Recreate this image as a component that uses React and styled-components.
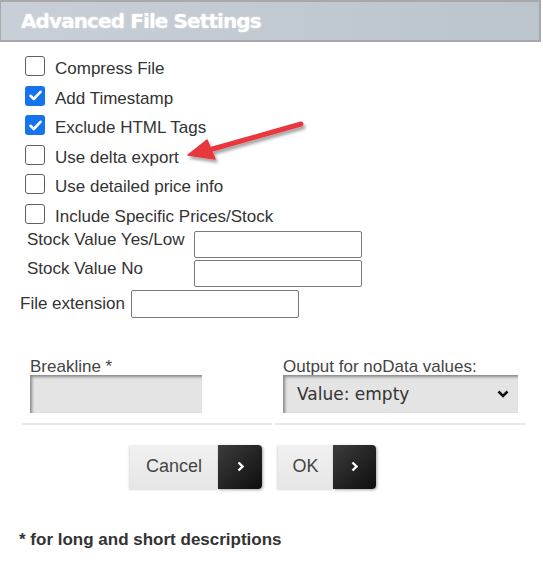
import React from "react";
import styled, { createGlobalStyle } from "styled-components";

const GlobalStyle = createGlobalStyle`
  body {
    margin: 0;
    background: #fff;
    font-family: "Liberation Sans", Arial, sans-serif;
  }
`;

const Dialog = styled.div`
  position: relative;
  width: 541px;
  height: 561px;
  background: #fff;
  color: #333;
`;

const Header = styled.div`
  height: 38px;
  display: flex;
  align-items: center;
  padding-left: 20px;
  border: 2px solid #a8a8a8;
  border-left-width: 1px;
  background: linear-gradient(90deg, #c8cfd6, #bcc4cc);
`;

const Title = styled.h1`
  margin: 0;
  font-family: "DejaVu Sans", Verdana, sans-serif;
  font-weight: bold;
  font-size: 20px;
  letter-spacing: -0.9px;
  color: #fff;
  text-shadow: 0 0 2px rgba(255, 255, 255, 0.6);
`;

const CheckList = styled.div`
  display: flex;
  flex-direction: column;
  gap: 6.6px;
  padding: 14px 0 0 25px;
`;

const CheckRow = styled.label`
  display: flex;
  align-items: flex-start;
  gap: 10px;
`;

const Box = styled.span`
  flex: none;
  width: 20px;
  height: 20px;
  box-sizing: border-box;
  border-radius: 3px;
  border: ${(p) => (p.checked ? "none" : "1.5px solid #5f5f5f")};
  background: ${(p) => (p.checked ? "#1673ee" : "#fff")};
  display: flex;
  align-items: center;
  justify-content: center;
`;

const CheckLabel = styled.span`
  font-size: 17px;
  line-height: 20px;
  padding-top: 3px;
`;

const Fields = styled.div`
  display: flex;
  flex-direction: column;
  gap: 2.5px;
  margin-top: 4px;
`;

const FieldRow = styled.div`
  display: flex;
  align-items: ${(p) => (p.center ? "center" : "flex-start")};
  gap: ${(p) => p.gap || 0}px;
  padding-left: ${(p) => p.indent}px;
`;

const FieldLabel = styled.span`
  flex: none;
  width: ${(p) => (p.width ? `${p.width}px` : "auto")};
  font-size: 17px;
  line-height: 17px;
`;

const TextInput = styled.input`
  width: 168px;
  height: ${(p) => p.h || 27}px;
  box-sizing: border-box;
  border: 1px solid #7a7a7a;
  border-radius: 2px;
  margin: 0;
  background: #fff;
`;

const Columns = styled.div`
  display: flex;
  gap: 3px;
  margin-top: 40px;
  padding-left: 22px;
`;

const Column = styled.div`
  width: ${(p) => p.width}px;
  box-sizing: border-box;
  padding: 0 0 10px 8px;
  border-bottom: 2px solid #e8e8e8;
`;

const ColLabel = styled.div`
  font-size: 17px;
  line-height: 17px;
  color: #444;
`;

const GrayBox = styled.div`
  width: 172px;
  height: 38px;
  background: #e4e4e4;
  box-shadow: inset 2px 2px 3px rgba(0, 0, 0, 0.4);
`;

const SelectBox = styled.div`
  width: 235px;
  height: 38px;
  box-sizing: border-box;
  display: flex;
  align-items: center;
  justify-content: space-between;
  padding: 0 9px 0 14px;
  background: #e4e4e4;
  box-shadow: inset 2px 2px 3px rgba(0, 0, 0, 0.4);
  font-family: "DejaVu Sans", Verdana, sans-serif;
  font-size: 17px;
  color: #333;
`;

const Buttons = styled.div`
  display: flex;
  gap: 16px;
  margin-top: 20px;
  padding-left: 130px;
`;

const Button = styled.div`
  display: flex;
  height: 44px;
`;

const ButtonText = styled.div`
  width: ${(p) => p.width}px;
  display: flex;
  align-items: center;
  justify-content: center;
  background: linear-gradient(#f1f1f1, #e6e6e6);
  box-shadow: -1px 1px 2px rgba(0, 0, 0, 0.15);
  font-size: 18px;
  color: #444;
`;

const ButtonArrow = styled.div`
  width: ${(p) => p.width}px;
  display: flex;
  align-items: center;
  justify-content: center;
  background: linear-gradient(135deg, #3c3c3c, #0e0e0e);
  border-radius: 0 4px 4px 0;
  box-shadow: 1px 1px 3px rgba(0, 0, 0, 0.35);
`;

const Footer = styled.p`
  margin: 41px 0 0;
  padding-left: 19px;
  font-size: 17px;
  line-height: 20px;
  font-weight: bold;
  color: #333;
`;

const Pointer = styled.svg`
  position: absolute;
  left: 180px;
  top: 110px;
  overflow: visible;
`;

const options = [
  { label: "Compress File", checked: false },
  { label: "Add Timestamp", checked: true },
  { label: "Exclude HTML Tags", checked: true },
  { label: "Use delta export", checked: false },
  { label: "Use detailed price info", checked: false },
  { label: "Include Specific Prices/Stock", checked: false },
];

const Check = () => (
  <svg width="13" height="11" viewBox="0 0 13 11">
    <polyline
      points="1.5,5.8 4.8,9 11.5,1.8"
      fill="none"
      stroke="#fff"
      strokeWidth="2.6"
      strokeLinecap="round"
      strokeLinejoin="round"
    />
  </svg>
);

const Chevron = ({ color = "#fff", w = 7, h = 11 }) => (
  <svg width={w} height={h} viewBox="0 0 7 11">
    <polyline
      points="1.5,1.5 5.5,5.5 1.5,9.5"
      fill="none"
      stroke={color}
      strokeWidth="2.4"
    />
  </svg>
);

const DownChevron = () => (
  <svg width="12" height="8" viewBox="0 0 12 8">
    <polyline
      points="1.5,1.5 6,6 10.5,1.5"
      fill="none"
      stroke="#111"
      strokeWidth="2.6"
    />
  </svg>
);

const App = () => {
  return (
    <Dialog>
      <GlobalStyle />
      <Header>
        <Title>Advanced File Settings</Title>
      </Header>

      <CheckList>
        {options.map((o) => (
          <CheckRow key={o.label}>
            <Box checked={o.checked}>{o.checked && <Check />}</Box>
            <CheckLabel>{o.label}</CheckLabel>
          </CheckRow>
        ))}
      </CheckList>

      <Fields>
        <FieldRow indent={27}>
          <FieldLabel width={167}>Stock Value Yes/Low</FieldLabel>
          <TextInput />
        </FieldRow>
        <FieldRow indent={27}>
          <FieldLabel width={167}>Stock Value No</FieldLabel>
          <TextInput />
        </FieldRow>
        <FieldRow indent={20} gap={6} center>
          <FieldLabel>File extension</FieldLabel>
          <TextInput h={28} />
        </FieldRow>
      </Fields>

      <Columns>
        <Column width={250}>
          <ColLabel>Breakline *</ColLabel>
          <GrayBox />
        </Column>
        <Column width={251}>
          <ColLabel>Output for noData values:</ColLabel>
          <SelectBox>
            <span>Value: empty</span>
            <DownChevron />
          </SelectBox>
        </Column>
      </Columns>

      <Buttons>
        <Button>
          <ButtonText width={88}>Cancel</ButtonText>
          <ButtonArrow width={44}>
            <Chevron />
          </ButtonArrow>
        </Button>
        <Button>
          <ButtonText width={55}>OK</ButtonText>
          <ButtonArrow width={43}>
            <Chevron />
          </ButtonArrow>
        </Button>
      </Buttons>

      <Footer>* for long and short descriptions</Footer>

      <Pointer width="130" height="60" viewBox="0 0 130 60">
        <defs>
          <filter id="shade" x="-20%" y="-40%" width="140%" height="180%">
            <feDropShadow dx="2" dy="3" stdDeviation="1.6" floodColor="#000" floodOpacity="0.35" />
          </filter>
        </defs>
        <g filter="url(#shade)" fill="#e8373d" stroke="#e8373d">
          <line x1="29" y1="40" x2="121" y2="14" strokeWidth="5" strokeLinecap="round" />
          <polygon points="8,45 27,30 35,49" strokeWidth="1.5" strokeLinejoin="round" />
        </g>
      </Pointer>
    </Dialog>
  );
};

export default App;
